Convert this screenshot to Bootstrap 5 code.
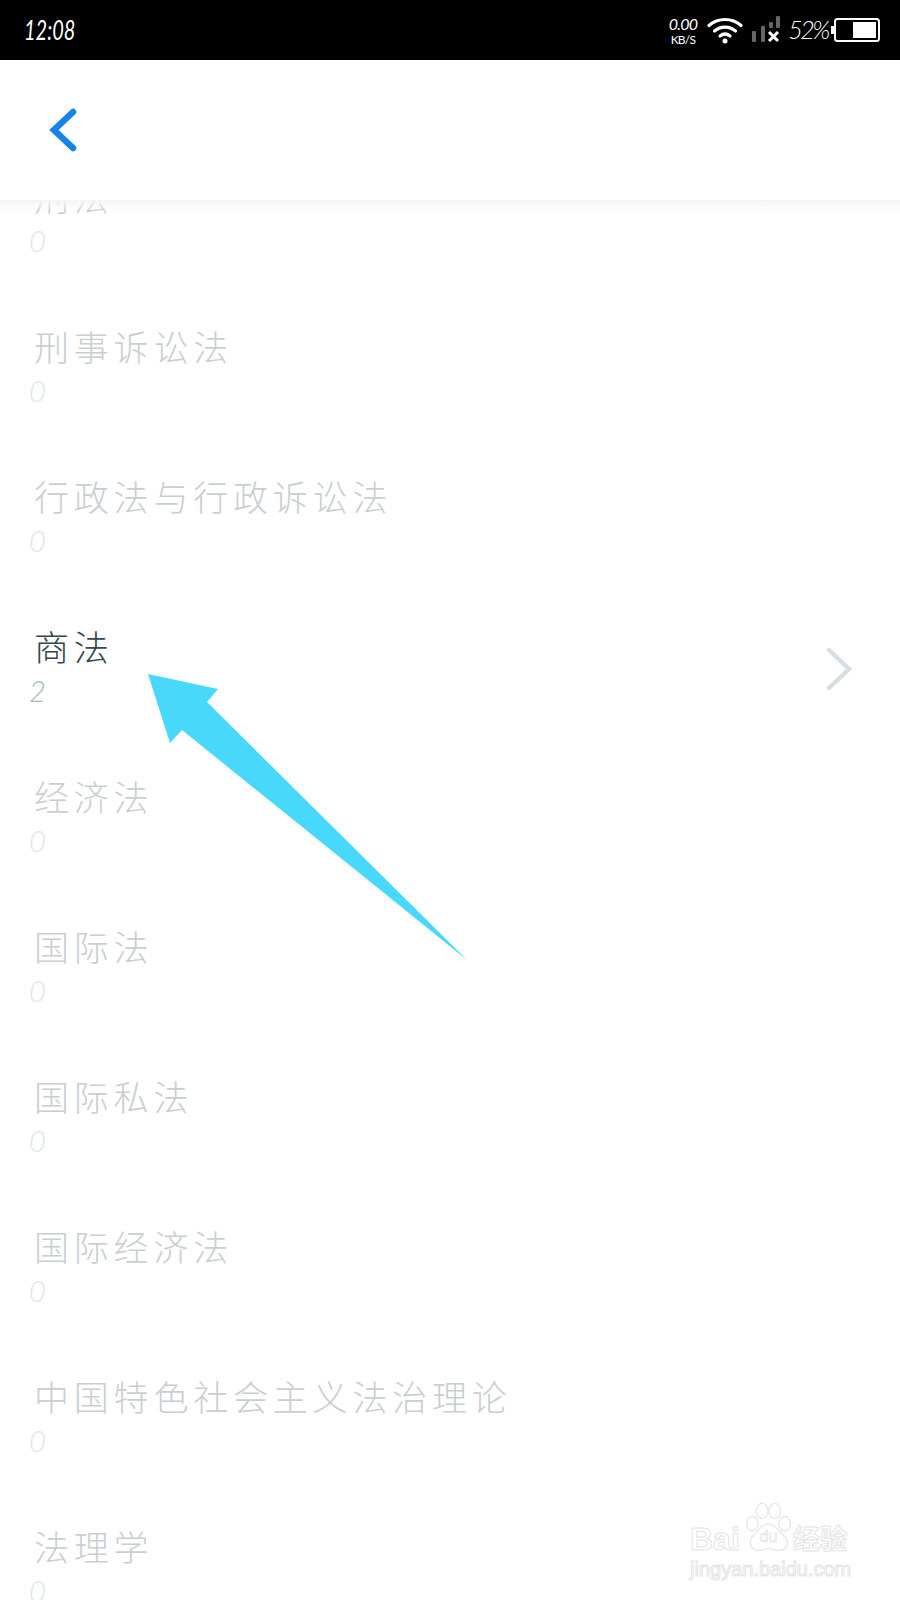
<!DOCTYPE html>
<html lang="zh-CN">
<head>
<meta charset="utf-8">
<title>商法</title>
<link href="https://cdn.jsdelivr.net/npm/bootstrap@5.3.0/dist/css/bootstrap.min.css" rel="stylesheet">
<style>
html,body{height:1600px;overflow:hidden;background:#fff;}
.phone-page{position:relative;width:900px;height:1600px;overflow:hidden;}
.status-strip{height:60px;background:#000;color:#fff;padding:0 19px 0 24px;font-family:Lato,sans-serif;font-style:italic;font-weight:400;}
.clock-text{font-size:27px;transform:scaleX(.74);transform-origin:left center;}
.speed-box{font-size:16px;line-height:16px;text-align:center;letter-spacing:-.8px;margin-right:10px;padding-top:4px;}
.speed-box span{display:block;font-size:12px;font-style:normal;}
.batt-text{font-size:25px;letter-spacing:-2.4px;margin:0 3px 0 7px;font-weight:300;}
.top-bar{height:141px;background:#fff;border-bottom:1.5px solid #cfd6d8;padding:0 0 0 48px;position:relative;z-index:2;align-items:center;}
.top-bar::after{content:"";position:absolute;left:0;right:0;top:100%;height:12px;background:linear-gradient(#f3f6f7,rgba(255,255,255,0));}
.list-clip{height:1399px;overflow:hidden;}
.subject-list{margin-top:-54px;}
.subject-item{height:150px;padding:25px 0 0 32px;border:0;background:transparent;position:relative;}
.subject-name{font-family:"Noto Sans CJK SC",sans-serif;font-weight:300;font-size:35px;line-height:47px;letter-spacing:4.8px;color:#c9cfd1;margin-left:2px;}
.subject-num{font-family:Lato,sans-serif;font-style:italic;font-weight:300;font-size:29px;line-height:44px;color:#e0e5e7;margin-left:-3px;}
.subject-item.is-on .subject-name{color:#34454d;}
.subject-item.is-on .subject-num{color:#a0b5bc;}
.row-chevron{position:absolute;right:47px;top:50px;}
.pointer-arrow{position:absolute;left:0;top:0;pointer-events:none;z-index:3;}
.mark-wrap{position:absolute;left:690px;top:1505px;width:170px;height:80px;z-index:3;}
.mark-bai,.mark-jy,.mark-url{position:absolute;color:#fff;-webkit-text-stroke:1px #e4e4e4;line-height:1;white-space:nowrap;}
.mark-bai{left:0;top:18px;font:700 32px/1 "Liberation Sans",sans-serif;}
.mark-jy{left:103px;top:19px;font:700 27px/1 "Noto Sans CJK SC",sans-serif;}
.mark-url{left:0;top:54px;font:400 20px/1 "Liberation Sans",sans-serif;}
.mark-paw{position:absolute;left:55px;top:-2px;}
</style>
</head>
<body>
<div class="phone-page">
  <div class="status-strip d-flex align-items-center justify-content-between">
    <div class="clock-text">12:08</div>
    <div class="d-flex align-items-center">
      <div class="speed-box">0.00<span>KB/S</span></div>
      <svg width="36" height="28" viewBox="0 0 36 28" class="me-2"><g fill="none" stroke="#fff" stroke-width="3.2" stroke-linecap="round"><path d="M2 9.5C11 1.5 25 1.5 34 9.5"/><path d="M7.5 15C13.5 9.8 22.5 9.8 28.5 15"/><path d="M13 20C16 17.6 20 17.6 23 20"/></g><circle cx="18" cy="25" r="2.5" fill="#fff"/></svg>
      <svg width="30" height="28" viewBox="0 0 30 28"><g fill="#666"><rect x="1" y="15" width="4" height="11" rx="1"/><rect x="10" y="10" width="4" height="16" rx="1"/><rect x="18" y="6" width="4" height="6" rx="1"/><rect x="25" y="0" width="4" height="12" rx="1"/></g><path d="M18 16l9 9M27 16l-9 9" stroke="#fff" stroke-width="3"/></svg>
      <div class="batt-text">52%</div>
      <svg width="50" height="28" viewBox="0 0 50 28"><rect x="0" y="10" width="3" height="8" fill="#fff"/><rect x="4" y="3" width="44" height="22" rx="2.5" fill="none" stroke="#fff" stroke-width="2"/><rect x="22" y="6" width="23" height="16" fill="#fff"/></svg>
    </div>
  </div>

  <nav class="navbar top-bar d-flex">
    <a href="#" class="d-block lh-1" aria-label="返回">
      <svg width="30" height="44" viewBox="0 0 30 44" class="d-block"><path d="M25 4 6 22 25 40" fill="none" stroke="#1483ea" stroke-width="6.5" stroke-linecap="round" stroke-linejoin="miter"/></svg>
    </a>
  </nav>

  <div class="list-clip">
    <div class="list-group list-group-flush subject-list">
      <div class="list-group-item subject-item"><div class="subject-name">刑法</div><div class="subject-num">0</div></div>
      <div class="list-group-item subject-item"><div class="subject-name">刑事诉讼法</div><div class="subject-num">0</div></div>
      <div class="list-group-item subject-item"><div class="subject-name">行政法与行政诉讼法</div><div class="subject-num">0</div></div>
      <div class="list-group-item subject-item is-on"><div class="subject-name">商法</div><div class="subject-num">2</div>
        <svg class="row-chevron" width="28" height="44" viewBox="0 0 28 44"><path d="M4 3 24 22 4 41" fill="none" stroke="#d5dfe2" stroke-width="4.4" stroke-linecap="round"/></svg>
      </div>
      <div class="list-group-item subject-item"><div class="subject-name">经济法</div><div class="subject-num">0</div></div>
      <div class="list-group-item subject-item"><div class="subject-name">国际法</div><div class="subject-num">0</div></div>
      <div class="list-group-item subject-item"><div class="subject-name">国际私法</div><div class="subject-num">0</div></div>
      <div class="list-group-item subject-item"><div class="subject-name">国际经济法</div><div class="subject-num">0</div></div>
      <div class="list-group-item subject-item"><div class="subject-name">中国特色社会主义法治理论</div><div class="subject-num">0</div></div>
      <div class="list-group-item subject-item"><div class="subject-name">法理学</div><div class="subject-num">0</div></div>
    </div>
  </div>

  <svg class="pointer-arrow" width="900" height="1600" viewBox="0 0 900 1600"><polygon points="148,674 218,689 207,702 467,960 182,730 170,743" fill="#48d8fb"/></svg>

  <div class="mark-wrap">
    <div class="mark-bai">Bai</div>
    <svg class="mark-paw" width="47" height="52" viewBox="0 0 52 58"><g fill="#fff" stroke="#e4e4e4" stroke-width="1.3"><ellipse cx="8" cy="23" rx="6.5" ry="8"/><ellipse cx="19" cy="9" rx="6.5" ry="8.5"/><ellipse cx="33" cy="9" rx="6.5" ry="8.5"/><ellipse cx="44" cy="23" rx="6.5" ry="8"/><path d="M26 23C18 23 16 31 9 36 3 42 6 53 15 53 20 53 22 51 26 51 30 51 33 53 38 53 47 53 50 42 43 36 36 31 34 23 26 23Z"/></g><text x="26" y="44" text-anchor="middle" font-family="Liberation Sans,sans-serif" font-size="18" fill="#fff" stroke="#e4e4e4" stroke-width=".8">du</text></svg>
    <div class="mark-jy">经验</div>
    <div class="mark-url">jingyan.baidu.com</div>
  </div>
</div>
<script src="https://cdn.jsdelivr.net/npm/bootstrap@5.3.0/dist/js/bootstrap.bundle.min.js"></script>
</body>
</html>
